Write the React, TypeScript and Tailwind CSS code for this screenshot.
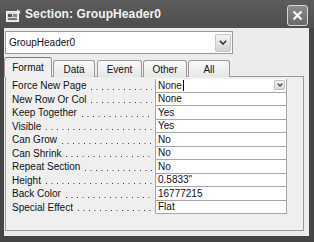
import React from "react";

const rows: [string, string][] = [
  ["Force New Page", "None"],
  ["New Row Or Col", "None"],
  ["Keep Together", "Yes"],
  ["Visible", "Yes"],
  ["Can Grow", "No"],
  ["Can Shrink", "No"],
  ["Repeat Section", "No"],
  ["Height", '0.5833"'],
  ["Back Color", "16777215"],
  ["Special Effect", "Flat"],
];

function Chevron({ size = 8 }: { size?: number }) {
  return (
    <svg width={size} height={size * 0.6} viewBox="0 0 10 6">
      <path d="M1 1 L5 5 L9 1" fill="none" stroke="#333" strokeWidth="2" />
    </svg>
  );
}

export default function App() {
  const font = { fontFamily: '"Liberation Sans", Arial, sans-serif' };
  return (
    <div
      className="w-[314px] h-[242px] bg-[#454545] flex flex-col overflow-hidden text-[#111]"
      style={font}
    >
      {/* Title bar */}
      <div className="h-[28px] flex items-center bg-gradient-to-b from-[#5c5c5c] to-[#4e4e4e] pl-[6px] pr-[6px]">
        <svg width="15" height="13" viewBox="0 0 15 13" className="mt-[2px]">
          <rect x="0.5" y="2.5" width="12" height="10" fill="#dcdcdc" stroke="#f4f4f4" />
          <rect x="2" y="5" width="4" height="3" fill="#555" />
          <rect x="2" y="9" width="9" height="2" fill="#777" />
          <rect x="7" y="5" width="4" height="3" fill="#888" />
          <path d="M11 0 L13 2 L15 1 L13.5 3 L15 5 L12.5 4 L11 6 L11.5 3.5 Z" fill="#fafafa" />
        </svg>
        <span className="ml-[4px] text-[12px] font-bold text-[#f2f2f2] tracking-[0.1px]">
          Section: GroupHeader0
        </span>
        <div className="ml-auto mt-[3px] w-[21px] h-[21px] rounded-[3px] border border-[#d6d6d6] bg-gradient-to-b from-[#8a8a8a] to-[#6a6a6a] flex items-center justify-center">
          <svg width="11" height="11" viewBox="0 0 11 11">
            <path d="M1.5 1.5 L9.5 9.5 M9.5 1.5 L1.5 9.5" stroke="#fafafa" strokeWidth="2.2" />
          </svg>
        </div>
      </div>

      {/* Body */}
      <div className="flex-1 pl-[4px] pr-[5px] pb-[6px] flex">
        <div className="flex-1 bg-[#ececec] flex flex-col pt-[3px] pl-[1px] pr-[5px] pb-[5px]">
          {/* Combobox */}
          <div className="w-[228px] h-[23px] bg-white border border-[#9a9a9a] flex items-center">
            <span className="pl-[3px] text-[10px]">GroupHeader0</span>
            <div className="ml-auto mr-[1px] w-[16px] h-[18px] rounded-[2px] border border-[#c4c4c4] bg-gradient-to-b from-[#f4f4f4] to-[#d4d4d4] flex items-center justify-center">
              <Chevron size={8} />
            </div>
          </div>

          {/* Tabs */}
          <div className="mt-[3px] h-[20px] flex items-end relative z-10">
            <div className="-ml-[1px] w-[48px] h-[20px] bg-[#efefef] border border-b-0 border-[#9a9a9a] border-t-[#7a7a7a] rounded-t-[3px] text-[10px] flex items-center justify-center pb-[1px]">
              Format
            </div>
            <div className="ml-[1px] w-[42px] h-[17px] bg-gradient-to-b from-[#fafafa] to-[#e6e6e6] border border-b-0 border-[#9a9a9a] rounded-t-[3px] text-[10px] flex items-center justify-center">
              Data
            </div>
            <div className="ml-[2px] w-[45px] h-[17px] bg-gradient-to-b from-[#fafafa] to-[#e6e6e6] border border-b-0 border-[#9a9a9a] rounded-t-[3px] text-[10px] flex items-center justify-center">
              Event
            </div>
            <div className="ml-[1px] w-[44px] h-[17px] bg-gradient-to-b from-[#fafafa] to-[#e6e6e6] border border-b-0 border-[#9a9a9a] rounded-t-[3px] text-[10px] flex items-center justify-center">
              Other
            </div>
            <div className="ml-[1px] w-[42px] h-[17px] bg-gradient-to-b from-[#fafafa] to-[#e6e6e6] border border-b-0 border-[#9a9a9a] rounded-t-[3px] text-[10px] flex items-center justify-center">
              All
            </div>
          </div>

          {/* Panel */}
          <div className="flex-1 -mt-px border border-[#9a9a9a] bg-[#efefef] pt-[2px] pl-[6px]">
            {rows.map(([label, value], i) => (
              <div key={label} className="flex h-[13.5px] text-[10px] leading-[13px]">
                <div className="w-[143px] flex whitespace-nowrap">
                  <span>{label}</span>
                  <span className="flex-1 self-end ml-[5px] mr-[3px] mb-[3px] h-[1px] bg-[linear-gradient(to_right,#333_1px,transparent_1px)] bg-[length:5.5px_1px]" />
                </div>
                <div
                  className={
                    "w-[132px] bg-white border-l border-r border-b border-[#a6a6a6] flex items-center pl-[2px] " +
                    (i === 0 ? "border-t-0" : "")
                  }
                >
                  <span>{value}</span>
                  {i === 0 && (
                    <>
                      <span className="ml-[1px] w-px h-[11px] bg-black" />
                      <div className="ml-auto mr-px w-[11px] h-[10px] rounded-[1px] border border-[#c4c4c4] bg-gradient-to-b from-[#f4f4f4] to-[#d6d6d6] flex items-center justify-center">
                        <Chevron size={6} />
                      </div>
                    </>
                  )}
                </div>
              </div>
            ))}
          </div>
        </div>
      </div>
    </div>
  );
}
